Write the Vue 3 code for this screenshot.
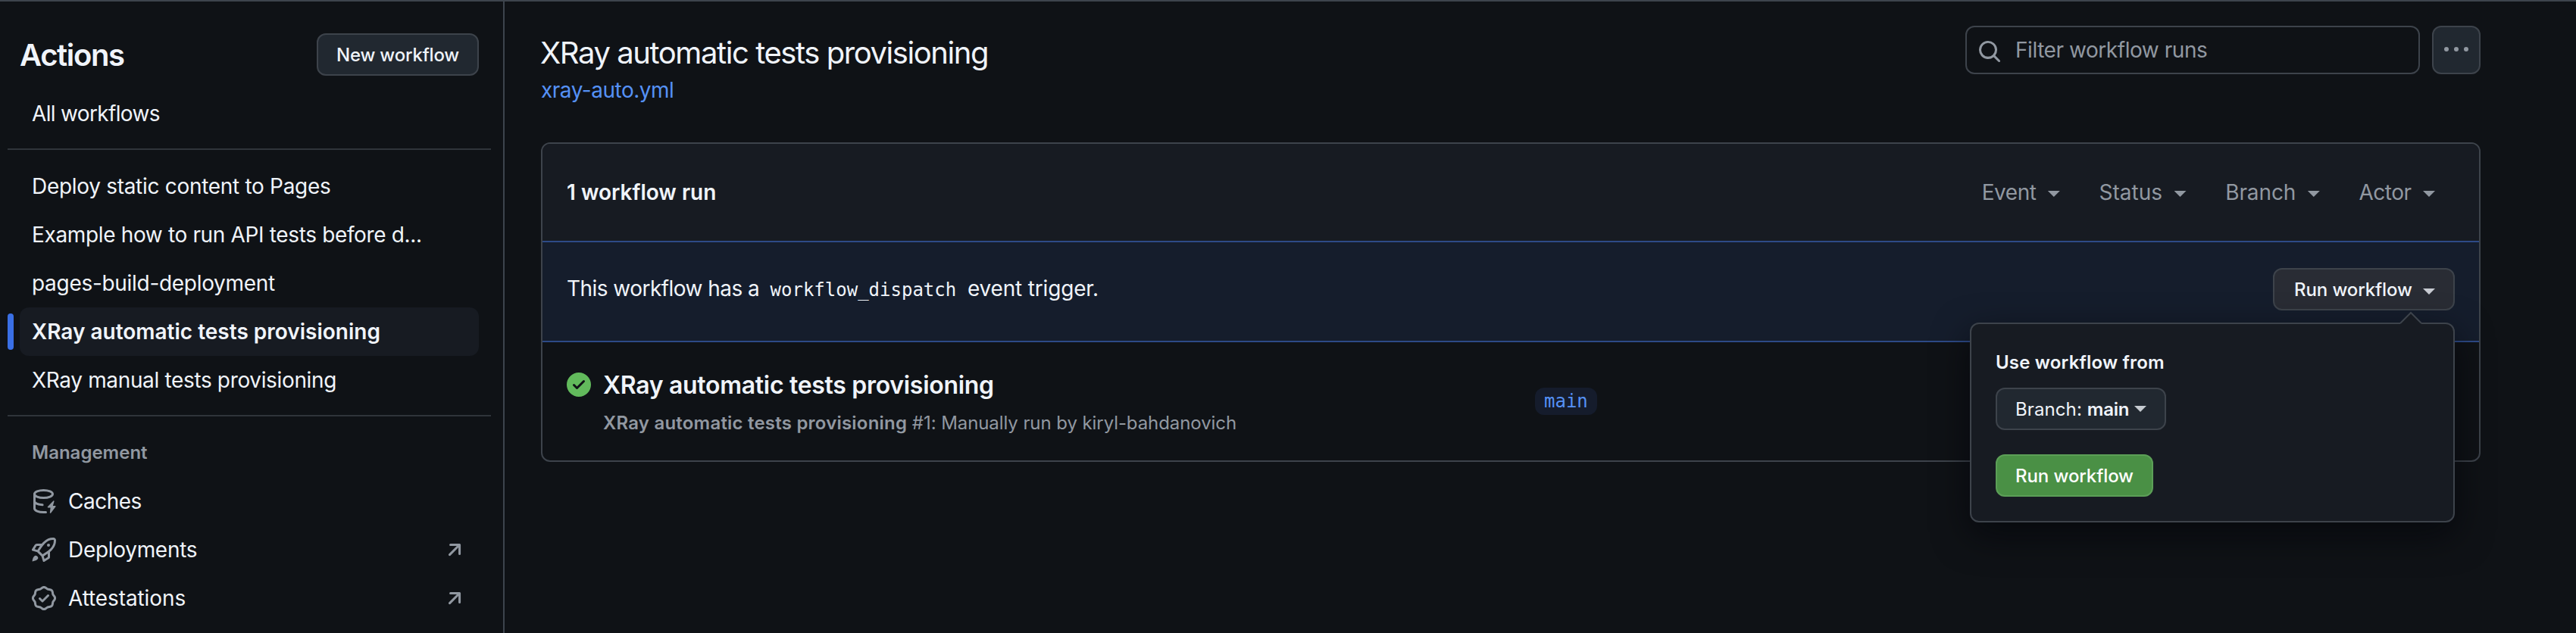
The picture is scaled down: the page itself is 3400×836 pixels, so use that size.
<script setup>
const workflows = [
  { label: 'Deploy static content to Pages' },
  { label: 'Example how to run API tests before d...', spacing: 'ls-35' },
  { label: 'pages-build-deployment' },
  { label: 'XRay automatic tests provisioning', active: true },
  { label: 'XRay manual tests provisioning', spacing: 'ls-35' },
]
const management = [
  { label: 'Caches', icon: 'cache', spacing: 'ls-50' },
  { label: 'Deployments', icon: 'rocket', external: true },
  { label: 'Attestations', icon: 'verified', external: true, spacing: 'ls-10' },
]
const filters = [
  { label: 'Event', spacing: 'ls-50' },
  { label: 'Status', spacing: 'ls-0' },
  { label: 'Branch', spacing: 'ls-10' },
  { label: 'Actor', spacing: 'ls-50' },
]
const icons = {
  rocket:
    'M14.064 0h.186C15.216 0 16 .784 16 1.75v.186a8.752 8.752 0 0 1-2.564 6.186l-.458.459c-.314.314-.641.616-.979.904v3.207c0 .608-.315 1.172-.833 1.49l-2.774 1.707a.749.749 0 0 1-1.11-.418l-.954-3.102a1.214 1.214 0 0 1-.145-.125L3.754 9.816a1.218 1.218 0 0 1-.124-.145L.528 8.717a.749.749 0 0 1-.418-1.11l1.71-2.774A1.748 1.748 0 0 1 3.31 4h3.204c.288-.338.59-.665.904-.979l.459-.458A8.749 8.749 0 0 1 14.064 0ZM8.938 3.623h-.002l-.458.458c-.76.76-1.437 1.598-2.02 2.5l-1.5 2.317 2.143 2.143 2.317-1.5c.902-.583 1.74-1.26 2.499-2.02l.459-.458a7.25 7.25 0 0 0 2.123-5.127V1.75a.25.25 0 0 0-.25-.25h-.186a7.249 7.249 0 0 0-5.125 2.123ZM3.56 14.56c-.732.732-2.334 1.045-3.005 1.148a.234.234 0 0 1-.201-.064.234.234 0 0 1-.064-.201c.103-.671.416-2.273 1.15-3.003a1.502 1.502 0 1 1 2.12 2.12Zm6.94-3.935c-.088.06-.177.118-.266.175l-2.35 1.521.548 1.783 1.949-1.2a.25.25 0 0 0 .119-.213ZM3.678 8.116 5.2 5.766c.058-.09.117-.178.176-.266H3.309a.25.25 0 0 0-.213.119l-1.2 1.95ZM12 5a1 1 0 1 1-2 0 1 1 0 0 1 2 0Z',
  verified:
    'm9.585.52.929.68c.153.112.331.186.518.215l1.138.175a2.678 2.678 0 0 1 2.24 2.24l.174 1.139c.029.187.103.365.215.518l.68.928a2.677 2.677 0 0 1 0 3.17l-.68.928a1.174 1.174 0 0 0-.215.518l-.175 1.138a2.678 2.678 0 0 1-2.241 2.241l-1.138.175a1.17 1.17 0 0 0-.518.215l-.928.68a2.677 2.677 0 0 1-3.17 0l-.928-.68a1.174 1.174 0 0 0-.518-.215L3.83 14.41a2.678 2.678 0 0 1-2.24-2.24l-.175-1.138a1.17 1.17 0 0 0-.215-.518l-.68-.928a2.677 2.677 0 0 1 0-3.17l.68-.928c.112-.153.186-.331.215-.518l.175-1.14a2.678 2.678 0 0 1 2.24-2.24l1.139-.175c.187-.029.365-.103.518-.215l.928-.68a2.677 2.677 0 0 1 3.17 0ZM7.303 1.728l-.927.68a2.67 2.67 0 0 1-1.18.489l-1.137.174a1.179 1.179 0 0 0-.987.987l-.174 1.136a2.677 2.677 0 0 1-.489 1.18l-.68.928a1.18 1.18 0 0 0 0 1.394l.68.927c.256.348.424.753.489 1.18l.174 1.137c.078.509.478.909.987.987l1.136.174a2.67 2.67 0 0 1 1.18.489l.928.68c.414.305.979.305 1.394 0l.927-.68a2.67 2.67 0 0 1 1.18-.489l1.137-.174a1.18 1.18 0 0 0 .987-.987l.174-1.136a2.67 2.67 0 0 1 .489-1.18l.68-.928a1.176 1.176 0 0 0 0-1.394l-.68-.927a2.686 2.686 0 0 1-.489-1.18l-.174-1.137a1.179 1.179 0 0 0-.987-.987l-1.136-.174a2.677 2.677 0 0 1-1.18-.489l-.928-.68a1.176 1.176 0 0 0-1.394 0ZM11.28 6.78l-3.75 3.75a.75.75 0 0 1-1.06 0L4.72 8.78a.751.751 0 0 1 .018-1.042.751.751 0 0 1 1.042-.018L7 8.94l3.22-3.22a.751.751 0 0 1 1.042.018.751.751 0 0 1 .018 1.042Z',
}
</script>

<template>
  <div class="page">
    <aside class="sidebar">
      <header class="side-head">
        <h2 class="side-title">Actions</h2>
        <button class="btn new-btn">New workflow</button>
      </header>
      <a class="item all ls-66">All workflows</a>
      <hr class="divider" />
      <nav class="list">
        <a v-for="w in workflows" :key="w.label" class="item" :class="[w.spacing, { active: w.active }]">{{ w.label }}</a>
      </nav>
      <hr class="divider" />
      <h3 class="group-title">Management</h3>
      <nav>
        <a v-for="m in management" :key="m.label" class="item with-icon" :class="m.spacing">
          <svg v-if="m.icon === 'cache'" class="icon" viewBox="0 0 16 16">
            <g fill="none" stroke="currentColor" stroke-width="1.5" stroke-linecap="round">
              <ellipse cx="7.75" cy="3.25" rx="6" ry="2.5" />
              <path d="M1.75 3.25v9.5c0 1.4 2.7 2.5 6 2.5h1.5" />
              <path d="M1.75 8c0 1.2 2.1 2.15 5.3 2.4" />
            </g>
            <path d="M14.3 7.6 10.3 11.7 10.6 12.2H12.3L11.9 15.6Q12.1 16.1 12.6 15.8L15.8 11.5 15.6 11H13.9L14.8 8Q14.8 7.5 14.3 7.6Z" fill="currentColor" />
          </svg>
          <svg v-else class="icon" viewBox="0 0 16 16"><path :d="icons[m.icon]" fill="currentColor" /></svg>
          <span class="item-text">{{ m.label }}</span>
          <svg v-if="m.external" class="icon" viewBox="0 0 16 16">
            <path d="M4.53 4.75A.75.75 0 0 1 5.28 4h6.01a.75.75 0 0 1 .75.75v6.01a.75.75 0 0 1-1.5 0v-4.2l-5.26 5.261a.749.749 0 0 1-1.275-.326.749.749 0 0 1 .215-.734L9.48 5.5h-4.2a.75.75 0 0 1-.75-.75Z" fill="currentColor" />
          </svg>
        </a>
      </nav>
    </aside>

    <main class="main">
      <header class="head">
        <div class="heading">
          <h1 class="title">XRay automatic tests provisioning</h1>
          <a class="file">xray-auto.yml</a>
        </div>
        <div class="search">
          <svg class="icon" viewBox="0 0 16 16">
            <path d="M10.68 11.74a6 6 0 0 1-7.922-8.982 6 6 0 0 1 8.982 7.922l3.04 3.04a.749.749 0 0 1-.326 1.275.749.749 0 0 1-.734-.215ZM11.5 7a4.499 4.499 0 1 0-8.997 0A4.499 4.499 0 0 0 11.5 7Z" fill="currentColor" />
          </svg>
          <span class="placeholder">Filter workflow runs</span>
        </div>
        <button class="btn kebab" aria-label="Show options">
          <svg class="dots" viewBox="0 0 32 6" fill="currentColor">
            <circle cx="3" cy="3" r="3" /><circle cx="16" cy="3" r="3" /><circle cx="29" cy="3" r="3" />
          </svg>
        </button>
      </header>

      <section class="card">
        <div class="card-head">
          <strong class="count">1 workflow run</strong>
          <div class="filters">
            <span v-for="f in filters" :key="f.label" class="filter">
              <span :class="f.spacing">{{ f.label }}</span><i class="caret"></i>
            </span>
          </div>
        </div>

        <div class="dispatch">
          <p class="dispatch-text">
            <span class="lead">This workflow has a </span><code>workflow_dispatch</code><span class="tail"> event trigger.</span>
          </p>
          <div class="run-menu">
            <button class="btn run-toggle"><span>Run workflow</span><i class="caret"></i></button>
            <div class="popover">
              <svg class="pointer" viewBox="0 0 32 18">
                <path d="M2 18V16L16 2 30 16V18Z" fill="#171b22" />
                <path d="M2 16 16 2 30 16" fill="none" stroke="#3d434b" stroke-width="2" />
              </svg>
              <strong class="pop-title">Use workflow from</strong>
              <button class="btn branch-btn"><span><span class="light">Branch: </span>main</span><i class="caret"></i></button>
              <button class="btn go-btn">Run workflow</button>
            </div>
          </div>
        </div>

        <div class="run">
          <svg class="icon ok" viewBox="0 0 16 16">
            <path d="M8 16A8 8 0 1 1 8 0a8 8 0 0 1 0 16Zm3.78-9.72a.751.751 0 0 0-.018-1.042.751.751 0 0 0-1.042-.018L6.75 9.19 5.28 7.72a.751.751 0 0 0-1.042.018.751.751 0 0 0-.018 1.042l2 2a.75.75 0 0 0 1.06 0Z" fill="currentColor" />
          </svg>
          <div class="run-info">
            <a class="run-title">XRay automatic tests provisioning</a>
            <p class="run-sub"><b>XRay automatic tests provisioning</b> #1: Manually run by kiryl-bahdanovich</p>
          </div>
          <span class="branch">main</span>
        </div>
      </section>
    </main>
  </div>
</template>

<style>
body {
  background: #0f1216;
}
</style>

<style scoped>
.page {
  box-sizing: border-box;
  display: flex;
  height: 836px;
  overflow: hidden;
  border-top: 2px solid #3d444d;
  background: #0f1216;
  color: #f0f4fa;
  font-family: Inter, "Liberation Sans", sans-serif;
  font-size: 28px;
}
.page *, .page *::before {
  box-sizing: border-box;
}
h1, h2, h3, p, hr {
  margin: 0;
}
.ls-0 { letter-spacing: 0; }
.ls-10 { letter-spacing: -0.1px; }
.ls-35 { letter-spacing: -0.35px; }
.ls-50 { letter-spacing: -0.5px; }
.ls-66 { letter-spacing: -0.66px; }

.icon {
  display: block;
  flex: none;
  width: 32px;
  height: 32px;
  color: #9198a1;
}
.caret {
  flex: none;
  width: 16px;
  height: 8px;
  background: currentColor;
  clip-path: polygon(0 0, 100% 0, 50% 100%);
}
.btn {
  display: flex;
  align-items: center;
  justify-content: center;
  height: 56px;
  padding: 1px 0 0;
  border: 2px solid #3d434b;
  border-radius: 12px;
  background: #212830;
  color: #f0f4fa;
  font: 500 24px/29px Inter, "Liberation Sans", sans-serif;
  letter-spacing: -0.1px;
  white-space: nowrap;
}

/* Sidebar */
.sidebar {
  flex: none;
  width: 666px;
  padding: 42px 16px 0 10px;
  border-right: 2px solid #3d444d;
}
.side-head {
  display: flex;
  justify-content: space-between;
  align-items: center;
  height: 56px;
  margin-bottom: 18px;
  padding: 0 16px;
}
.side-title {
  padding-top: 1px;
  font-size: 40px;
  font-weight: 600;
  letter-spacing: -1.37px;
}
.new-btn {
  width: 214px;
  letter-spacing: -0.2px;
}
.item {
  position: relative;
  display: flex;
  align-items: center;
  height: 64px;
  margin: 0 16px;
  padding: 0 16px;
  border-radius: 12px;
  letter-spacing: -0.3px;
  white-space: pre;
}
.item.ls-10 { letter-spacing: -0.1px; }
.item.ls-35 { letter-spacing: -0.35px; }
.item.ls-50 { letter-spacing: -0.5px; }
.item.ls-66 { letter-spacing: -0.66px; }
.active {
  background: #171b22;
  font-weight: 600;
  letter-spacing: 0;
}
.active::before {
  content: "";
  position: absolute;
  left: -16px;
  top: 8px;
  width: 8px;
  height: 48px;
  border-radius: 6px;
  background: #3a6fe4;
}
.divider {
  height: 2px;
  border: 0;
  margin: 14px 0 16px;
  background: #2f343a;
}
.group-title {
  height: 64px;
  padding-left: 32px;
  color: #9198a1;
  font-size: 24px;
  font-weight: 600;
  line-height: 63px;
}
.with-icon {
  gap: 16px;
}
.item-text {
  flex: 1;
}

/* Main column */
.main {
  flex: none;
  width: 2608px;
  padding: 32px 0 0 48px;
}
.head {
  display: flex;
  align-items: flex-start;
  height: 154px;
}
.heading {
  flex: 1;
  display: flex;
  flex-direction: column;
}
.title {
  font-size: 40px;
  font-weight: 400;
  line-height: 60px;
  margin: 6px 0 0 -1px;
  letter-spacing: -1.43px;
}
.file {
  margin-top: -2px;
  color: #5591f5;
  line-height: 42px;
  letter-spacing: -0.49px;
}
.search {
  display: flex;
  align-items: center;
  width: 600px;
  height: 64px;
  margin-right: 16px;
  padding: 0 14px;
  border: 2px solid #3d434b;
  border-radius: 12px;
}
.search .icon {
  margin-top: 4px;
}
.placeholder {
  margin-left: 18px;
  color: #9198a1;
  letter-spacing: -0.45px;
}
.kebab {
  width: 64px;
  height: 64px;
  padding: 0;
}
.dots {
  width: 32px;
  height: 6px;
  margin-top: -2px;
  color: #9198a1;
}

.card {
  height: 422px;
  border: 2px solid #3d434b;
  border-radius: 12px;
}
.card-head {
  display: flex;
  align-items: center;
  justify-content: space-between;
  height: 128px;
  padding: 0 58px 0 32px;
  border-radius: 10px 10px 0 0;
  background: #171b22;
}
.count {
  font-weight: 600;
}
.filters {
  display: flex;
  gap: 51.7px;
  color: #9198a1;
}
.filter {
  display: flex;
  align-items: center;
  gap: 15.5px;
}
.filter .caret {
  margin-top: 4px;
}

.dispatch {
  display: flex;
  justify-content: space-between;
  align-items: flex-start;
  height: 134px;
  padding: 34px 32px 0;
  border: solid #2d4a87;
  border-width: 2px 0;
  background: #151d2c;
}
.dispatch-text {
  line-height: 54px;
  white-space: pre;
  display: flex;
  align-items: baseline;
}
.lead {
  letter-spacing: -0.54px;
}
.tail {
  letter-spacing: -0.17px;
}
code {
  padding: 0 7px;
  font: 24px/1 "DejaVu Sans Mono", monospace;
}
.run-menu {
  position: relative;
}
.run-toggle {
  width: 240px;
  justify-content: space-between;
  padding: 1px 24px 0 26px;
  background: #292c34;
}
.run-toggle .caret {
  margin-top: 5px;
  opacity: 0.8;
}
.popover {
  position: absolute;
  z-index: 1;
  top: 72px;
  right: 0;
  width: 640px;
  height: 264px;
  padding: 32px;
  display: flex;
  flex-direction: column;
  align-items: flex-start;
  border: 2px solid #3d434b;
  border-radius: 12px;
  background: #171b22;
  box-shadow: 0 16px 48px rgba(1, 4, 9, 0.6);
}
.pointer {
  position: absolute;
  top: -17px;
  right: 40px;
  width: 32px;
  height: 18px;
}
.pop-title {
  height: 52px;
  font-size: 24px;
  font-weight: 600;
  line-height: 37px;
  letter-spacing: 0.19px;
}
.branch-btn {
  width: 225px;
  margin-bottom: 32px;
  padding: 1px 24px 0 24px;
  justify-content: space-between;
  font-weight: 600;
  letter-spacing: -0.25px;
}
.branch-btn .caret {
  margin-top: -1px;
  opacity: 0.8;
}
.light {
  font-weight: 400;
  letter-spacing: 0.1px;
}
.go-btn {
  width: 208px;
  border-color: #5c9f57;
  background: #4a9045;
  color: #fff;
}

.run {
  display: flex;
  align-items: flex-start;
  height: 156px;
  padding: 0 32px;
}
.ok {
  margin-top: 40px;
  color: #62ba5c;
}
.run-info {
  width: 1230px;
  margin: 32px 0 0 16px;
}
.run-title {
  display: block;
  font-size: 32px;
  font-weight: 600;
  line-height: 49px;
  letter-spacing: -0.3px;
}
.run-sub {
  margin-top: 7px;
  color: #9198a1;
  font-size: 24px;
  line-height: 37px;
  letter-spacing: -0.08px;
}
.run-sub b {
  font-weight: 600;
  letter-spacing: 0.21px;
}
.branch {
  margin-top: 60px;
  padding: 0 12px;
  height: 36px;
  border-radius: 12px;
  background: #151c2c;
  color: #5591f5;
  font: 24px/36px "DejaVu Sans Mono", monospace;
}
</style>
